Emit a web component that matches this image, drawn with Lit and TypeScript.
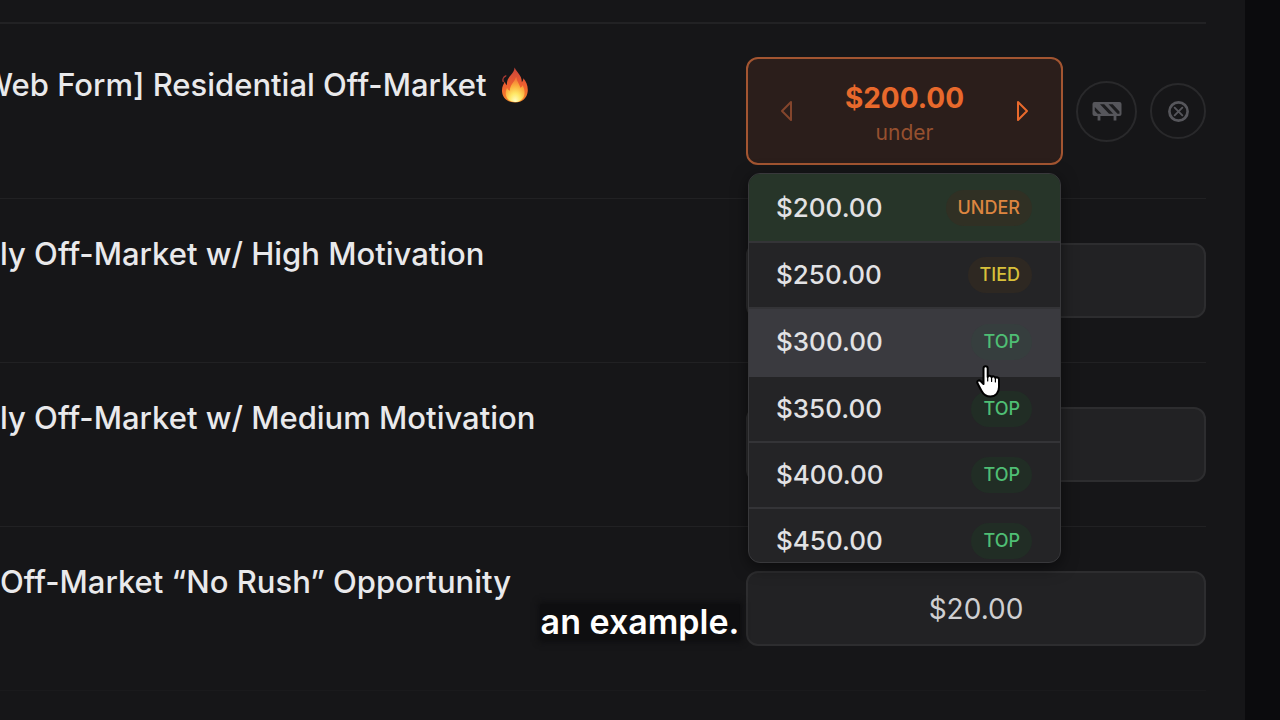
import { LitElement, html, css, svg } from "lit";
import { customElement, property, state } from "lit/decorators.js";
import { classMap } from "lit/directives/class-map.js";

type Rank = "under" | "tied" | "top";

interface Bid {
  price: string;
  rank: Rank;
}

const BIDS: Bid[] = [
  { price: "$200.00", rank: "under" },
  { price: "$250.00", rank: "tied" },
  { price: "$300.00", rank: "top" },
  { price: "$350.00", rank: "top" },
  { price: "$400.00", rank: "top" },
  { price: "$450.00", rank: "top" },
];

const fireIcon = html`
  <svg class="fire" viewBox="0 0 28 36" role="img" aria-label="fire">
    <defs>
      <linearGradient id="outer" x1="0" y1="0" x2="0" y2="1">
        <stop offset="0" stop-color="#c8443a" />
        <stop offset="0.5" stop-color="#ee5f30" />
        <stop offset="1" stop-color="#f58a2c" />
      </linearGradient>
      <radialGradient id="inner" cx="0.5" cy="0.95" r="0.85">
        <stop offset="0" stop-color="#fffcc0" />
        <stop offset="0.35" stop-color="#fee766" />
        <stop offset="0.7" stop-color="#fbae3e" />
        <stop offset="1" stop-color="#f47a35" />
      </radialGradient>
    </defs>
    <path
      fill="url(#outer)"
      d="M13.600 0.500c1 3.200 4.600 5.800 6.200 9.600c0.800 1.900 1.100 3.600 1 5.100c0.900-0.900 1.500-2.300 1.600-4c3 3.400 4.800 7.800 4.300 13.300c-0.600 6.500-5.600 11-12.600 11C6.400 35.500 1.300 30.800 1 24.300c-0.200-4.300 1.500-7 2.900-9.700c0.300 1.700 0.900 2.900 2 3.700c-0.300-4.300 1.300-7.300 4-10.400C12 5.600 13.400 3.500 13.600 0.500z"
    />
    <path fill="none" stroke="#a83a34" stroke-width="1.400" stroke-linecap="round" d="M2.200 14.500c-0.900-2.200 0.400-4.600 2.600-5.600" />
    <path
      fill="url(#inner)"
      d="M15.200 10c0.400 4.200 3.400 7.200 4.200 10.700c1.200-0.400 1.900-1.400 2.100-2.700c1.800 3 2.700 7.100 1.700 10.400c-1.200 4-4.600 6.600-9.100 6.600c-4.800 0-8.400-2.700-9.200-7.100c-0.500-2.900 0.200-4.900 1.200-7.100c0.500 1.700 1.500 2.600 2.800 3C8.600 18.600 12.900 15.600 15.200 10z"
    />
  </svg>
`;

const barrierIcon = html`
  <svg class="barrier" viewBox="0 0 30 20" aria-hidden="true">
    <rect x="0.500" y="1" width="29" height="14" rx="2" fill="currentColor" />
    <path class="cut" d="M8 3.200h4.200l9 9.600h-4.200zM16.500 3.200h4.200l6.800 7.300v2.300h-2zM2.800 6l6.600 6.800h-3.800l-2.800-3z" />
    <path d="M7 14v5.500M23 14v5.500" stroke="currentColor" stroke-width="2.800" />
  </svg>
`;

const closeIcon = html`
  <svg class="close" viewBox="0 0 24 24" aria-hidden="true">
    <circle cx="12" cy="12" r="9.500" fill="none" stroke="currentColor" stroke-width="2.800" />
    <path d="M8 8l8 8M16 8l-8 8" stroke="currentColor" stroke-width="2" stroke-linecap="round" />
  </svg>
`;

const arrow = (d: string) => html`
  <svg class="arrow" viewBox="0 0 14 24" aria-hidden="true">
    ${svg`<path d=${d} fill="none" stroke="currentColor" stroke-width="2" stroke-linejoin="round" />`}
  </svg>
`;

@customElement("bid-menu")
class BidMenu extends LitElement {
  @property({ attribute: false }) bids: Bid[] = [];
  @property({ type: Number }) selected = 0;
  @property({ type: Number }) active = -1;

  static styles = css`
    :host {
      display: block;
      box-sizing: border-box;
      max-height: 390px;
      overflow: hidden;
      border: 1px solid #38383b;
      border-radius: 12px;
      background: #242426;
      box-shadow: 0 4px 16px rgba(0, 0, 0, 0.5);
    }
    .option {
      box-sizing: border-box;
      display: flex;
      align-items: center;
      justify-content: space-between;
      width: 100%;
      height: 66px;
      padding: 0 28px 0 27px;
      border: 0;
      border-bottom: 2px solid #343437;
      background: transparent;
      color: #e2e2e4;
      font: 500 26px/36px Inter, sans-serif;
      cursor: pointer;
    }
    .option.selected {
      height: 69px;
      background: #273529;
    }
    .option.active {
      height: 68px;
      background: #3a3a3f;
      border-color: #3a3a3f;
    }
    .badge {
      padding: 0 12px;
      border-radius: 18px;
      font-size: 18px;
      text-transform: uppercase;
    }
    .under {
      color: #dc8540;
      background: #303024;
    }
    .tied {
      color: #d8c03a;
      background: #2e2822;
    }
    .top {
      color: #4fbe74;
      background: #212d25;
    }
    .active .top {
      background: #363e3e;
    }
  `;

  render() {
    return html`${this.bids.map(
      (bid, i) => html`
        <button
          role="option"
          aria-selected=${i === this.selected}
          class=${classMap({ option: true, selected: i === this.selected, active: i === this.active })}
        >
          <span>${bid.price}</span>
          <span class="badge ${bid.rank}">${bid.rank}</span>
        </button>
      `
    )}`;
  }
}

@customElement("app-root")
class AppRoot extends LitElement {
  @state() private selected = 0;

  static styles = css`
    :host {
      display: block;
      min-height: 100vh;
      overflow: hidden;
      position: relative;
      background: #0b0b0d;
      color: #e9e9eb;
      font-family: Inter, sans-serif;
    }
    .panel {
      box-sizing: border-box;
      min-height: 100vh;
      margin-right: 35px;
      padding: 22px 39px 0 0;
      background: #161618;
    }
    .list {
      border-top: 2px solid #222224;
    }
    .row {
      display: grid;
      grid-template-columns: minmax(0, 1fr) 460px;
      padding: 44px 0;
      border-bottom: 1px solid #212123;
    }
    .row.open {
      padding: 33px 0;
    }
    .row:last-child {
      border-color: #1a1a1c;
    }
    .title {
      margin: -10px 0 0;
      font-size: 31px;
      line-height: 42px;
      font-weight: 500;
      white-space: nowrap;
    }
    .row.open .title {
      margin-top: 7px;
      text-indent: -18px;
    }
    .controls {
      display: flex;
      align-items: center;
      gap: 13px;
    }
    .picker {
      position: relative;
      flex: 1;
    }
    .stepper {
      box-sizing: border-box;
      display: flex;
      align-items: center;
      justify-content: space-between;
      height: 108px;
      padding: 0 31px;
      border: 2px solid #a35531;
      border-radius: 12px;
      background: #2b1e1b;
    }
    .step {
      display: flex;
      padding: 0;
      border: 0;
      background: none;
      color: #e8692c;
    }
    .step:disabled {
      color: #84452c;
    }
    .arrow {
      width: 14px;
      height: 24px;
    }
    .value {
      display: flex;
      flex-direction: column;
      align-items: center;
      padding-top: 6px;
    }
    .amount {
      color: #e8692c;
      font-size: 28px;
      line-height: 38px;
      font-weight: 700;
    }
    .rank {
      color: #96502f;
      font-size: 21px;
      line-height: 32px;
    }
    bid-menu {
      position: absolute;
      z-index: 2;
      top: calc(100% + 8px);
      left: 2px;
      right: 2px;
    }
    .round {
      display: grid;
      place-items: center;
      box-sizing: border-box;
      width: 61px;
      height: 61px;
      padding: 0;
      border: 2px solid #29292b;
      border-radius: 50%;
      background: none;
      color: #56565b;
    }
    .round.small {
      width: 56px;
      height: 56px;
    }
    .barrier {
      width: 30px;
      height: 20px;
    }
    .cut {
      fill: #1c1c1e;
    }
    .close {
      width: 23px;
      height: 23px;
    }
    .field {
      box-sizing: border-box;
      width: 100%;
      height: 75px;
      padding: 0;
      border: 2px solid #2d2d2f;
      border-radius: 12px;
      background: #222224;
      color: #cfcfd1;
      font: 400 28px/36px Inter, sans-serif;
      text-align: center;
    }
    .fire {
      width: 28px;
      height: 36px;
      margin-left: 6px;
      vertical-align: -7px;
    }
    .caption {
      position: absolute;
      z-index: 3;
      left: 50%;
      bottom: 80px;
      margin: 0;
      transform: translateX(-50%);
      background: #0e0e10;
      box-shadow: 0 0 6px 2px #0e0e10;
      color: #fff;
      font-size: 34px;
      line-height: 36px;
      font-weight: 600;
    }
    .pointer {
      position: absolute;
      z-index: 4;
      top: 364px;
      left: 974px;
      width: 28px;
      height: 36px;
    }
  `;

  private field(title: string, id: string, value: string) {
    return html`
      <div class="row">
        <label class="title" for=${id}>${title}</label>
        <div class="controls"><input class="field" id=${id} .value=${value} /></div>
      </div>
    `;
  }

  render() {
    const bid = BIDS[this.selected];
    return html`
      <main class="panel">
        <div class="list">
          <div class="row open">
            <h2 class="title">Web Form] Residential Off-Market ${fireIcon}</h2>
            <div class="controls">
              <div class="picker">
                <div class="stepper">
                  <button class="step" disabled aria-label="Lower bid">${arrow("M12 3L3 12L12 21Z")}</button>
                  <div class="value">
                    <span class="amount">${bid.price}</span>
                    <span class="rank">${bid.rank}</span>
                  </div>
                  <button class="step" aria-label="Raise bid">${arrow("M2 3L11 12L2 21Z")}</button>
                </div>
                <bid-menu role="listbox" .bids=${BIDS} .selected=${this.selected} .active=${2}></bid-menu>
              </div>
              <button class="round" aria-label="Block">${barrierIcon}</button>
              <button class="round small" aria-label="Remove">${closeIcon}</button>
            </div>
          </div>
          ${this.field("ly Off-Market w/ High Motivation", "high", "")}
          ${this.field("ly Off-Market w/ Medium Motivation", "medium", "")}
          ${this.field("Off-Market “No Rush” Opportunity", "no-rush", "$20.00")}
        </div>
      </main>
      <p class="caption">an example.</p>
      <svg class="pointer" viewBox="0 0 28 36" aria-hidden="true">
        <path
          d="M9.500 4.500c0-3 4.200-3 4.200 0v8.500c0.600-2 3.600-1.700 3.900 0.300c0.800-1.500 3.500-1.100 3.800 0.700c1.100-1.300 3.600-0.600 3.600 1.500v7.500c0 5.500-3.300 9.500-8.600 9.500c-4.500 0-7-2-8.800-5.500L3.600 19.600c-1.200-2.500 1.300-4.200 3.200-2.400l2.700 2.800z"
          fill="#fff"
          stroke="#000"
          stroke-width="2"
          stroke-linejoin="round"
        />
        <path d="M13.700 13v4M17.600 14v3.500M21.400 15v3" stroke="#000" stroke-width="1.200" stroke-linecap="round" />
      </svg>
    `;
  }
}
